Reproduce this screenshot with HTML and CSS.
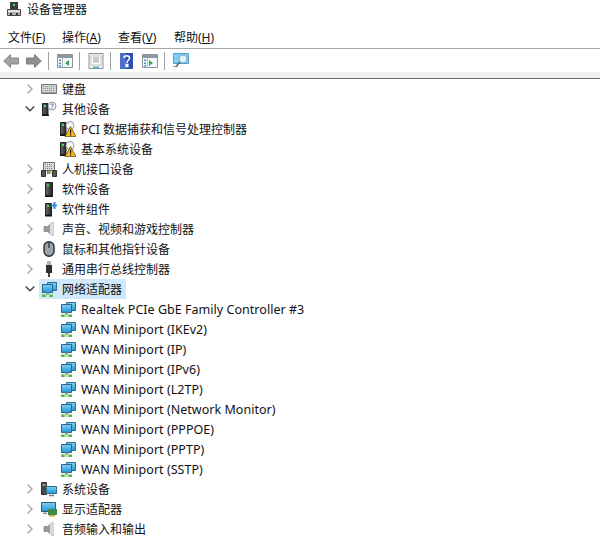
FILE: index.html
```html
<!DOCTYPE html>
<html lang="zh">
<head>
<meta charset="utf-8">
<title>设备管理器</title>
<link rel="stylesheet" href="styles.css">
</head>
<body>
<svg class="defs" width="0" height="0">
  <defs>
    <linearGradient id="screen" x1="0" y1="0" x2="0" y2="1"><stop offset="0" stop-color="#7fd0f5"/><stop offset="1" stop-color="#1f97dc"/></linearGradient>
    <linearGradient id="towerfill" x1="0" y1="0" x2="1" y2="0"><stop offset="0" stop-color="#6b6b6b"/><stop offset="1" stop-color="#262626"/></linearGradient>
    <symbol id="tower" viewBox="0 0 16 16">
      <path d="M4.500 1.500h7v13h-7z" fill="url(#towerfill)" stroke="#222"/>
      <path d="M6 3.500h2v2H6z" fill="#3fe060"/>
      <path d="M4 14.500h8v1.500H4z" fill="#161616"/>
    </symbol>
    <symbol id="net" viewBox="0 0 16 16">
      <path d="M6.500 1.500h9v8h-9z" fill="url(#screen)" stroke="#2f6c92"/>
      <path d="M1.500 3.500h10v8h-10z" fill="url(#screen)" stroke="#2a6488"/>
      <path d="M5 11.500h3V14H5z" fill="#8b9a9a"/>
      <path d="M1 13.500h11V16H1z" fill="#54b948"/>
      <path d="M4.500 13.500h4V16h-4z" fill="#c4ecb6"/>
    </symbol>
    <symbol id="warn" viewBox="0 0 16 16">
      <path d="M.5 1.500h5.500v12H.5z" fill="url(#towerfill)" stroke="#222"/>
      <path d="M2 3h2v2H2z" fill="#3fe060"/>
      <path d="M0 13.500h6.500V15H0z" fill="#161616"/>
      <circle cx="10" cy="4.500" r="4" fill="#f4f6f8" stroke="#8d98a3"/>
      <path d="M10.500 5.500 16 15.500H5z" fill="#f6b91f" stroke="#6f5210" stroke-width=".8"/>
      <path d="M10 8.500h1.200v4H10zM10 13.200h1.200v1.200H10z" fill="#1c1c1c"/>
    </symbol>
    <symbol id="chev-r" viewBox="0 0 10 10"><path d="M2.500.5 7 5 2.500 9.500" fill="none" stroke="#a6a6a6" stroke-width="1.400"/></symbol>
    <symbol id="chev-d" viewBox="0 0 10 10"><path d="M.7 2.500 5 6.800 9.300 2.500" fill="none" stroke="#404040" stroke-width="1.400"/></symbol>
    <symbol id="speaker" viewBox="0 0 16 16">
      <path d="M3 5.500h3.500L12 1v14L6.500 10.500H3z" fill="#9b9b9b" stroke="#808080" stroke-width=".7"/>
      <path d="M9 3.500v9l3 2.500V1z" fill="#dcdcdc"/>
    </symbol>
    <symbol id="window" viewBox="0 0 16 14">
      <path d="M.5.500h15v13H.5z" fill="#f4f7fb" stroke="#8c949c"/>
      <path d="M1 1h14v3H1z" fill="#8d979f"/>
      <path d="M2 5.500h2v1.500H2zM2 8.500h2V10H2zM2 11h2v1.500H2z" fill="#4c8fd0"/>
      <path d="M5.500 4v9.500" stroke="#b3bac0"/>
    </symbol>
  </defs>
</svg>

<header class="titlebar">
  <svg class="title-icon" viewBox="0 0 14 14" width="14" height="14"><path d="M3 0h8v7H3z" fill="#3a3a3a"/><path d="M6 2h2v2H6z" fill="#3fe060"/><path d="M.5 7.500h13v6H.5z" fill="#b0b0b0" stroke="#444"/><path d="M1 8h12v2H1z" fill="#e2e2e2"/><path d="M3 11h2v2H3zM9 11h2v2H9z" fill="#333"/></svg>
  <span>设备管理器</span>
</header>

<nav class="menubar">
  <span class="menu-item">文件(<u>F</u>)</span>
  <span class="menu-item">操作(<u>A</u>)</span>
  <span class="menu-item">查看(<u>V</u>)</span>
  <span class="menu-item">帮助(<u>H</u>)</span>
</nav>

<div class="toolbar">
  <svg class="tb-arrow" viewBox="0 0 16 14" width="16" height="14"><path d="M7.500.500 .7 7l6.800 6.500V10H15.500V4H7.500z" fill="#a2a2a2" stroke="#8a8a8a"/></svg>
  <svg class="tb-arrow" viewBox="0 0 16 14" width="16" height="14"><path d="M8.500.500 15.300 7l-6.800 6.500V10H.5V4h8z" fill="#8f8f8f" stroke="#7a7a7a"/></svg>
  <i class="tb-sep"></i>
  <svg class="tb-icon" width="16" height="14"><use href="#window"/><path d="M12 6v6L8 9z" fill="#35a84a"/></svg>
  <i class="tb-sep"></i>
  <svg class="tb-icon" viewBox="0 0 16 16" width="16" height="16"><path d="M1 .5h14v15H1z" fill="#f0f0f0" stroke="#8f8f8f"/><path d="M3 3h10v9H3z" fill="#fff" stroke="#c4c4c4"/><path d="M5 5h6M5 7h6M5 9h6" stroke="#8d97a0"/><path d="M5 13.500h6V15H5z" fill="#45b5dc"/></svg>
  <i class="tb-sep"></i>
  <svg class="tb-icon tb-help" viewBox="0 0 13 16" width="13" height="16"><path d="M0 0h13v16H0z" fill="#2f4fae"/><path d="M0 0h6v16H0z" fill="#4a6fd0"/><path d="M4 5c0-3 5.500-3 5.500 0 0 2-2.500 2-2.500 5M6.200 11.500h1.600v2H6.200z" fill="none" stroke="#fff" stroke-width="1.500"/></svg>
  <svg class="tb-icon tb-icon-gap" width="16" height="14"><use href="#window"/><path d="M7 6v6l4-3z" fill="#35a84a"/></svg>
  <i class="tb-sep"></i>
  <svg class="tb-icon" viewBox="0 0 16 16" width="16" height="16"><path d="M.5.500h15v10H.5z" fill="#7fcdf0" stroke="#4aa3cf"/><circle cx="10" cy="6" r="4" fill="#e0f3fb" stroke="#8fa7b3"/><path d="M7 9 2.500 14" stroke="#666" stroke-width="1.500"/><path d="M0 13.500h5" stroke="#9a9a9a"/></svg>
</div>
<div class="band"></div>

<main class="tree">
  <div class="row"><svg class="chev"><use href="#chev-r"/></svg><svg class="ic" viewBox="0 0 16 16"><path d="M.5 3.500h15v9H.5z" fill="#d5d5d5" stroke="#777"/><path d="M2 5.500h12M2 7.500h12M2 9.500h12" stroke="#8e8e8e" stroke-dasharray="1 1"/><path d="M1 11.500h14" stroke="#999"/></svg><span>键盘</span></div>
  <div class="row"><svg class="chev"><use href="#chev-d"/></svg><svg class="ic" viewBox="0 0 16 16"><path d="M1.500 2.500h5.500v11H1.500z" fill="url(#towerfill)" stroke="#222"/><path d="M3 4h2v2H3z" fill="#3fe060"/><path d="M1 13.500h7V15H1z" fill="#161616"/><circle cx="11" cy="5" r="4" fill="#f5f7fa" stroke="#8d98a3"/><path d="M9.700 4c0-1.600 2.600-1.600 2.600 0 0 1-1.300 1-1.300 2M11 6.800v1" fill="none" stroke="#5f7fb5"/></svg><span>其他设备</span></div>
  <div class="row depth"><svg class="ic"><use href="#warn"/></svg><span>PCI 数据捕获和信号处理控制器</span></div>
  <div class="row depth"><svg class="ic"><use href="#warn"/></svg><span>基本系统设备</span></div>
  <div class="row"><svg class="chev"><use href="#chev-r"/></svg><svg class="ic" viewBox="0 0 16 16"><path d="M2.500 1.500h11v8h-11z" fill="#dcdcdc" stroke="#6e6e6e"/><path d="M4 3.500h8M4 5.500h8M4 7.500h8" stroke="#7c7c7c" stroke-dasharray="1 1"/><path d="M.5 9.500h4v6h-4zM11.500 9.500h4v6h-4z" fill="#565656" stroke="#333"/><path d="M6 10h1.500v3H6z" fill="#e04a3a"/><path d="M7.500 10H9v3H7.500z" fill="#2f8fe0"/><path d="M9 10h1.500v3H9z" fill="#e8c040"/></svg><span>人机接口设备</span></div>
  <div class="row"><svg class="chev"><use href="#chev-r"/></svg><svg class="ic"><use href="#tower"/></svg><span>软件设备</span></div>
  <div class="row"><svg class="chev"><use href="#chev-r"/></svg><svg class="ic" viewBox="0 0 16 16"><path d="M4.500 2.500h6v11.500h-6z" fill="url(#towerfill)" stroke="#222"/><path d="M6 4h2v2H6z" fill="#3fe060"/><path d="M4 14h7v1.500H4z" fill="#161616"/><path d="M12.500 1h2v2.500H16.500v2h-2V8h-2V5.500H10v-2h2.500z" fill="#2f8fe0"/></svg><span>软件组件</span></div>
  <div class="row"><svg class="chev"><use href="#chev-r"/></svg><svg class="ic"><use href="#speaker"/></svg><span>声音、视频和游戏控制器</span></div>
  <div class="row"><svg class="chev"><use href="#chev-r"/></svg><svg class="ic" viewBox="0 0 16 16"><rect x="3" y=".7" width="10" height="14.600" rx="5" fill="#9aa4ae" stroke="#2a2a2a" stroke-width="1.400"/><path d="M8 2v5" stroke="#4d5966" stroke-width="2"/></svg><span>鼠标和其他指针设备</span></div>
  <div class="row"><svg class="chev"><use href="#chev-r"/></svg><svg class="ic" viewBox="0 0 16 16"><path d="M6 0h4v4H6z" fill="#b5b5b5"/><path d="M5 4h6v8H5z" fill="#2e2e2e"/><path d="M7 12h2v4H7z" fill="#444"/></svg><span>通用串行总线控制器</span></div>
  <div class="row"><svg class="chev chev-sel"><use href="#chev-d"/></svg><span class="selected"><svg class="ic" viewBox="0 0 16 16"><use href="#net"/></svg><span>网络适配器</span></span></div>
  <div class="row depth"><svg class="ic"><use href="#net"/></svg><span class="latin">Realtek PCIe GbE Family Controller #3</span></div>
  <div class="row depth"><svg class="ic"><use href="#net"/></svg><span class="latin">WAN Miniport (IKEv2)</span></div>
  <div class="row depth"><svg class="ic"><use href="#net"/></svg><span class="latin">WAN Miniport (IP)</span></div>
  <div class="row depth"><svg class="ic"><use href="#net"/></svg><span class="latin">WAN Miniport (IPv6)</span></div>
  <div class="row depth"><svg class="ic"><use href="#net"/></svg><span class="latin">WAN Miniport (L2TP)</span></div>
  <div class="row depth"><svg class="ic"><use href="#net"/></svg><span class="latin">WAN Miniport (Network Monitor)</span></div>
  <div class="row depth"><svg class="ic"><use href="#net"/></svg><span class="latin">WAN Miniport (PPPOE)</span></div>
  <div class="row depth"><svg class="ic"><use href="#net"/></svg><span class="latin">WAN Miniport (PPTP)</span></div>
  <div class="row depth"><svg class="ic"><use href="#net"/></svg><span class="latin">WAN Miniport (SSTP)</span></div>
  <div class="row"><svg class="chev"><use href="#chev-r"/></svg><svg class="ic" viewBox="0 0 16 16"><path d="M.5 1.500h5v12h-5z" fill="#4a4a4a" stroke="#333"/><path d="M1.500 3.500h3v1h-3z" fill="#ddd"/><path d="M5.500 5.500h10v7h-10z" fill="url(#screen)" stroke="#2f6c92"/><path d="M8 14.500h5" stroke="#777" stroke-width="1.500"/></svg><span>系统设备</span></div>
  <div class="row"><svg class="chev"><use href="#chev-r"/></svg><svg class="ic" viewBox="0 0 16 16"><path d="M.5 1.500h14v9H.5z" fill="url(#screen)" stroke="#30586f"/><path d="M2 11.500h4V13H2z" fill="#888"/><path d="M7 8h9v6H7z" fill="#3e8a4a"/><path d="M8 14h6v1.500H8z" fill="#e0a63a"/></svg><span>显示适配器</span></div>
  <div class="row"><svg class="chev"><use href="#chev-r"/></svg><svg class="ic"><use href="#speaker"/></svg><span>音频输入和输出</span></div>
</main>
</body>
</html>
```
FILE: styles.css
```css
html, body {
  margin: 0;
  padding: 0;
  height: 541px;
  overflow: hidden;
  background: #fff;
  font-family: "Noto Sans", "Noto Sans CJK SC", sans-serif;
  font-size: 12px;
  color: #111;
}

.defs { position: absolute; }

.titlebar {
  height: 18px;
  padding: 0 0 0 7px;
  display: flex;
  align-items: center;
  gap: 6px;
}

.title-icon { flex: none; }

.menubar {
  height: 31px;
  padding: 10px 0 0 8px;
  box-sizing: border-box;
  display: grid;
  grid-template-columns: 54px 56px 56px auto;
  border-bottom: 1px solid #a8a8a8;
  line-height: 20px;
}

.menu-item { white-space: nowrap; }

.toolbar {
  height: 23px;
  display: flex;
  align-items: center;
  padding-left: 3px;
  background: #fff;
}

.tb-arrow { margin-right: 7px; flex: none; }

.tb-sep {
  width: 1px;
  height: 18px;
  background: #a0a0a0;
  margin: 0 8px 0 6px;
}

.tb-arrow + .tb-sep { margin-left: -1px; }

.tb-icon { flex: none; }
.tb-help { margin-left: 1px; }
.tb-icon-gap { margin-left: 9px; }

.band {
  height: 6px;
  background: #f0f0f0;
  border-bottom: 1px solid #6d6d6d;
}

.row {
  height: 20px;
  display: flex;
  align-items: center;
  padding-left: 25px;
  white-space: nowrap;
}

.row.depth { padding-left: 60px; }

.chev { width: 10px; height: 10px; margin-right: 6px; flex: none; }
.chev-sel { margin-right: 4px; }

.ic { width: 16px; height: 16px; margin-right: 5px; flex: none; }

.latin {
  font-size: 12.5px;
  letter-spacing: 0.03px;
}

.selected {
  display: flex;
  align-items: center;
  height: 20px;
  padding: 0 4px 0 2px;
  background: #d0e8fb;
}
```
